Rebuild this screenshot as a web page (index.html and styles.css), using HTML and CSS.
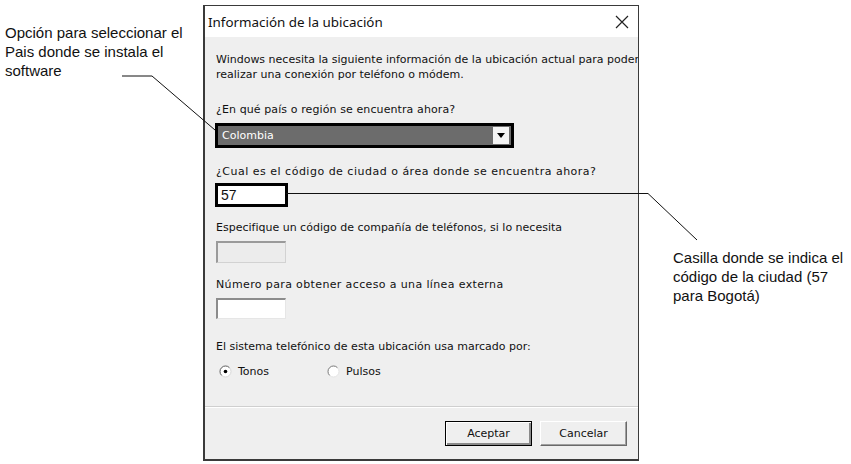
FILE: index.html
```html
<!DOCTYPE html>
<html lang="es">
<head>
<meta charset="utf-8">
<title>Información de la ubicación</title>
<link rel="stylesheet" href="styles.css">
</head>
<body>
<div class="page">
  <div class="note note-left">Opción para seleccionar el<br>Pais donde se instala el<br>software</div>

  <div class="dialog">
    <div class="titlebar">
      <span class="title">Información de la ubicación</span>
      <svg class="close" width="14" height="14" viewBox="0 0 14 14"><path d="M1 1 L13 13 M13 1 L1 13" stroke="#222" stroke-width="1.2" fill="none"/></svg>
    </div>
    <div class="body">
      <div class="content">
        <p class="para">Windows necesita la siguiente información de la ubicación actual para poder<br>realizar una conexión por teléfono o módem.</p>

        <p class="label l1">¿En qué país o región se encuentra ahora?</p>
        <div class="combo">
          <span class="combo-text">Colombia</span>
          <span class="combo-btn"><svg width="8" height="5" viewBox="0 0 8 5"><path d="M0 0 H8 L4 5 Z" fill="#000"/></svg></span>
        </div>

        <p class="label l2">¿Cual es el código de ciudad o área donde se encuentra ahora?</p>
        <div class="field field-hl">57</div>

        <p class="label l3">Especifique un código de compañía de teléfonos, si lo necesita</p>
        <div class="field field-disabled"></div>

        <p class="label l4">Número para obtener acceso a una línea externa</p>
        <div class="field field-plain"></div>

        <p class="label l5">El sistema telefónico de esta ubicación usa marcado por:</p>
        <div class="radios">
          <span class="radio"><svg width="13" height="13" viewBox="0 0 13 13"><circle cx="6.5" cy="6.5" r="5.5" fill="#fff" stroke="#d8d8d8"/><path d="M2.6 10.4 A5.5 5.5 0 0 1 10.4 2.6" stroke="#6a6a6a" fill="none"/><circle cx="6.5" cy="6.5" r="1.8" fill="#000"/></svg>Tonos</span>
          <span class="radio"><svg width="13" height="13" viewBox="0 0 13 13"><circle cx="6.5" cy="6.5" r="5.5" fill="#fff" stroke="#e4e4e4"/><path d="M2.6 10.4 A5.5 5.5 0 0 1 10.4 2.6" stroke="#808080" fill="none"/></svg>Pulsos</span>
        </div>
      </div>
      <div class="footer">
        <button class="btn btn-default">Aceptar</button>
        <button class="btn">Cancelar</button>
      </div>
    </div>
  </div>

  <div class="note note-right">Casilla donde se indica el<br>código de la ciudad (57<br>para Bogotá)</div>

  <svg class="leaders" width="851" height="464" viewBox="0 0 851 464">
    <polyline points="122,76 152,76 215,130" fill="none" stroke="#111" stroke-width="1"/>
    <polyline points="286,193.5 648,193.5 697,240" fill="none" stroke="#111" stroke-width="1"/>
  </svg>
</div>
</body>
</html>
```

FILE: styles.css
```css
* { box-sizing: border-box; }
html, body { margin: 0; padding: 0; background: #fff; }
body { width: 851px; height: 464px; overflow: hidden; }

.page {
  position: relative;
  display: flex;
  align-items: flex-start;
  width: 851px;
  height: 464px;
  font-family: "Liberation Sans", Arial, sans-serif;
  color: #111;
}

.note {
  font-family: "Liberation Sans", Arial, sans-serif;
  font-size: 15px;
  line-height: 19px;
  color: #111;
}
.note-left { flex: none; width: 203px; padding: 23px 0 0 5px; }
.note-right { padding: 248px 0 0 34px; white-space: nowrap; }

.dialog {
  flex: none;
  width: 436px;
  height: 456px;
  margin-top: 5px;
  border: 1px solid #3a3a3a;
  border-left-width: 2px;
  border-bottom-width: 2px;
  display: flex;
  flex-direction: column;
  background: #efefef;
  overflow: hidden;
}

.titlebar {
  height: 31px;
  background: #fff;
  display: flex;
  align-items: center;
  justify-content: space-between;
  padding: 0 9px 0 3px;
  flex: none;
}
.title {
  font-family: "Noto Sans", "Open Sans", sans-serif;
  font-size: 13.4px;
  color: #111;
}
.close { display: block; }

.body {
  flex: 1;
  display: flex;
  flex-direction: column;
  font-family: "DejaVu Sans", Verdana, sans-serif;
  font-size: 11px;
  color: #111;
}

.content {
  flex: 1;
  padding: 15px 0 0 11px;
  white-space: nowrap;
}

p { margin: 0; line-height: 15px; }
.l1 { margin-top: 20px; letter-spacing: 0.1px; }
.l2 { margin-top: 16px; letter-spacing: 0.5px; }
.l3 { margin-top: 13px; }
.l4 { margin-top: 14px; letter-spacing: 0.37px; }
.l5 { margin-top: 20px; }

.combo {
  margin-top: 6px;
  margin-left: -1px;
  width: 299px;
  height: 25px;
  border: 3px solid #000;
  background: #6c6c6c;
  display: flex;
  align-items: center;
  justify-content: space-between;
  padding: 0 2px 0 4px;
}
.combo-text { color: #fff; }
.combo-btn {
  width: 16px;
  height: 17px;
  background: #f4f4f4;
  display: flex;
  align-items: center;
  justify-content: center;
}

.field {
  margin-top: 4px;
  width: 70px;
}
.field-hl {
  margin-left: -1px;
  width: 73px;
  height: 24px;
  border: 3px solid #000;
  background: #fff;
  font-family: "Liberation Sans", Arial, sans-serif;
  font-size: 14px;
  line-height: 18px;
  padding-left: 3px;
}
.field-disabled {
  margin-top: 6px;
  height: 22px;
  background: #ececec;
  border: 1px solid #d2d2d2;
  border-top: 2px solid #9a9a9a;
  border-left: 2px solid #9a9a9a;
}
.field-plain {
  margin-top: 6px;
  height: 21px;
  background: #fff;
  border: 1px solid #e6e6e6;
  border-top: 2px solid #8c8c8c;
  border-left: 2px solid #8c8c8c;
}

.radios {
  margin-top: 10px;
  display: flex;
  line-height: 15px;
}
.radio {
  display: flex;
  align-items: center;
  gap: 6px;
  width: 108px;
  padding-left: 3px;
}
.radio svg { display: block; }

.footer {
  flex: none;
  height: 53px;
  border-top: 1px solid #cfcfcf;
  box-shadow: inset 0 1px 0 #fff;
  display: flex;
  justify-content: flex-end;
  align-items: flex-start;
  gap: 8px;
  padding: 14px 11px 0 0;
}
.btn {
  width: 87px;
  height: 25px;
  font-family: "DejaVu Sans", Verdana, sans-serif;
  font-size: 11px;
  color: #111;
  background: #efefef;
  border: 1px solid;
  border-color: #fff #696969 #696969 #fff;
  box-shadow: inset -1px -1px 0 #a0a0a0;
  padding: 0;
}
.btn-default {
  border: 1px solid #000;
  box-shadow: inset 1px 1px 0 #fff, inset -2px -2px 0 #8a8a8a;
}

.leaders {
  position: absolute;
  left: 0;
  top: 0;
  pointer-events: none;
}
```
